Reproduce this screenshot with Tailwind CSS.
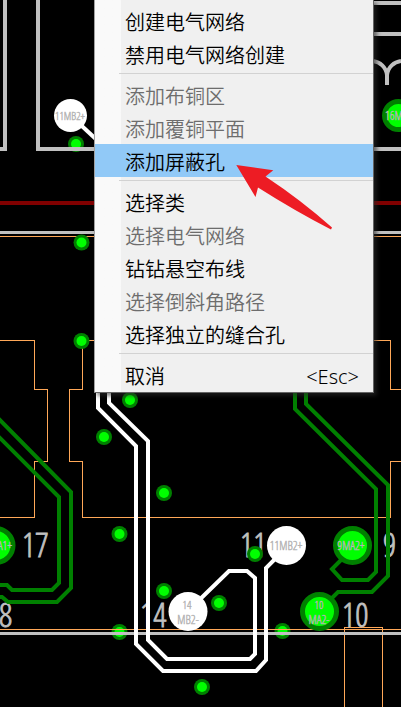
<!DOCTYPE html>
<html lang="zh-CN">
<head>
<meta charset="utf-8">
<meta name="viewport" content="width=device-width, initial-scale=1">
<title>PCB 布线</title>
<script src="https://cdn.jsdelivr.net/npm/@tailwindcss/browser@4"></script>
</head>
<body class="bg-black">
<main class="relative min-h-screen overflow-hidden bg-black font-['Noto_Sans','Noto_Sans_CJK_SC',sans-serif]">
  <svg class="absolute inset-0 h-full w-full" viewBox="0 0 401 707" preserveAspectRatio="xMinYMin slice" aria-label="PCB">
    <defs>
      <g id="via"><circle r="8" fill="#008000"/><circle r="5" fill="#00ff00"/></g>
    </defs>

    <!-- vias below the outline -->
    <use href="#via" x="76" y="144"/>
    <use href="#via" x="119.500" y="632"/>
    <use href="#via" x="282.500" y="631"/>

    <!-- component outlines -->
    <g fill="none" stroke="#ffa858" stroke-width="1" shape-rendering="crispEdges">
      <path d="M0 236.500H401M0 340.500H34.500V389.500H47.500V461.500H34.500V517.500H0"/>
      <path d="M94 340.500H82.500V389.500H69.500V461.500H82.500V517.500H390.500V461.500H401M373 340.500H390.500V389.500H401"/>
      <path d="M0 629.500H401M344.500 707V627.500H382.500V707"/>
    </g>
    <path d="M0 203H401" stroke="#800000" stroke-width="4"/>
    <g fill="none" stroke="#c0c0c0" stroke-width="4">
      <path d="M5 0V149H0M38 0V149H401M373 3H401M373 34H401"/>
      <path d="M373 61C380 62 386 67 387 75V85M387 75C388 67 394 62 401 61"/>
      <path d="M0 232.500H401M0 633.500H401" stroke-width="3"/>
    </g>
    <use href="#via" x="81.500" y="242.500"/>
    <use href="#via" x="81.500" y="341"/>

    <!-- pin numbers -->
    <g fill="#c0c0c0" stroke="#c0c0c0" stroke-width="0.8" font-family="'Open Sans Condensed Light','Open Sans Condensed','Noto Sans',sans-serif" font-weight="300" font-size="33">
      <text x="22" y="557">17</text>
      <text x="240" y="557">11</text>
      <text x="383" y="557">9</text>
      <text x="-1" y="627">8</text>
      <text x="140" y="627">14</text>
      <text x="342" y="627">10</text>
    </g>

    <!-- traces -->
    <g fill="none" stroke="#008000" stroke-width="4">
      <path d="M-2 418L71 492V588L57 602H8L2 597H-2"/>
      <path d="M-2 436L59 497V583L52 590H12L7 585H-2"/>
      <path d="M295 390V409L376 489V572L368 580H342L332 569L344 557"/>
      <path d="M306 390V404L388 485V576L372 592H338L328 602"/>
    </g>
    <g fill="none" stroke="#fff" stroke-width="4">
      <path d="M70 115L98 141"/>
      <path d="M98 390V408L136 446V644L163 671H256L266 660V568L277 557"/>
      <path d="M109 390V403L148 441V640L167 659H250L255 654V578L247 571H229L190 609"/>
    </g>

    <!-- vias -->
    <use href="#via" x="130" y="400"/>
    <use href="#via" x="104" y="437"/>
    <use href="#via" x="164" y="493"/>
    <use href="#via" x="119.500" y="534"/>
    <use href="#via" x="164" y="591"/>
    <use href="#via" x="219" y="603"/>
    <use href="#via" x="202" y="687"/>
    <use href="#via" x="255" y="554"/>

    <!-- pads -->
    <g fill="#fff">
      <circle cx="70.500" cy="115.500" r="16.500"/>
      <circle cx="286.500" cy="545.500" r="19.500"/>
      <circle cx="188" cy="611.500" r="19.500"/>
    </g>
    <g fill="#00ff00" stroke="#008000" stroke-width="5">
      <circle cx="398.500" cy="115.500" r="14"/>
      <circle cx="352.500" cy="545.500" r="17"/>
      <circle cx="319.500" cy="611.500" r="17"/>
      <circle cx="-4" cy="545.500" r="17"/>
    </g>
    <g fill="#b4b4b4" stroke="#b4b4b4" stroke-width="0.4" font-family="'Open Sans Condensed Light','Open Sans Condensed','Noto Sans',sans-serif" font-weight="300" font-size="12" text-anchor="middle">
      <text x="70" y="120" font-size="11">11MB2+</text>
      <text x="286" y="550">11MB2+</text>
      <text x="351" y="550">9MA2+</text>
      <text x="12" y="550" text-anchor="end">MA1+</text>
      <text x="385" y="120" text-anchor="start">16MB2-</text>
      <text x="187" y="609" font-size="11">14</text><text x="188" y="624">MB2-</text>
      <text x="319" y="609" font-size="11">10</text><text x="319" y="624">MA2-</text>
    </g>
  </svg>

  <div role="menu" class="absolute top-0 left-[94px] w-[280px] border-r border-b border-l border-[#646464] border-l-[#a0a0a0] bg-linear-to-r from-[#f9f9f9] from-[26px] to-[#f0f0f0] to-[26px] pt-1 pb-px text-xl leading-8 font-[350] text-black shadow-[3px_3px_4px_rgba(40,40,40,0.6)]">
    <button role="menuitem" class="flex h-[33px] w-full items-center pt-1 pl-[30px]">创建电气网络</button>
    <button role="menuitem" class="flex h-[33px] w-full items-center pt-1 pl-[30px]">禁用电气网络创建</button>
    <div role="separator" class="ml-6 h-2 pt-[3px]"><div class="h-px bg-[#d2d2d2]"></div></div>
    <button role="menuitem" disabled class="flex h-[33px] w-full items-center pt-1 pl-[30px] text-[#6d6d6d]">添加布铜区</button>
    <button role="menuitem" disabled class="flex h-[33px] w-full items-center pt-1 pl-[30px] text-[#6d6d6d]">添加覆铜平面</button>
    <button role="menuitem" class="flex h-[33px] w-full items-center bg-[#91c9f7] pt-1 pl-[30px]">添加屏蔽孔</button>
    <div role="separator" class="ml-6 h-2 pt-[3px]"><div class="h-px bg-[#d2d2d2]"></div></div>
    <button role="menuitem" class="flex h-[33px] w-full items-center pt-1 pl-[30px]">选择类</button>
    <button role="menuitem" disabled class="flex h-[33px] w-full items-center pt-1 pl-[30px] text-[#6d6d6d]">选择电气网络</button>
    <button role="menuitem" class="flex h-[33px] w-full items-center pt-1 pl-[30px]">钻钻悬空布线</button>
    <button role="menuitem" disabled class="flex h-[33px] w-full items-center pt-1 pl-[30px] text-[#6d6d6d]">选择倒斜角路径</button>
    <button role="menuitem" class="flex h-[33px] w-full items-center pt-1 pl-[30px]">选择独立的缝合孔</button>
    <div role="separator" class="ml-6 h-2 pt-[3px]"><div class="h-px bg-[#d2d2d2]"></div></div>
    <button role="menuitem" class="flex h-[33px] w-full items-center justify-between pt-1 pr-3.5 pl-[30px]"><span>取消</span><span>&lt;Esc&gt;</span></button>
  </div>

  <svg class="pointer-events-none absolute top-[164px] left-[236px] h-[66px] w-[97px]" viewBox="236 164 97 66" aria-hidden="true">
    <path d="M236.300 165L273.300 170.200L265.500 176.500Q301 200 332 227.500L331 229.500Q295 211 258 187.500L255.500 197Z" fill="#ed1c24"/>
  </svg>
</main>
</body>
</html>
